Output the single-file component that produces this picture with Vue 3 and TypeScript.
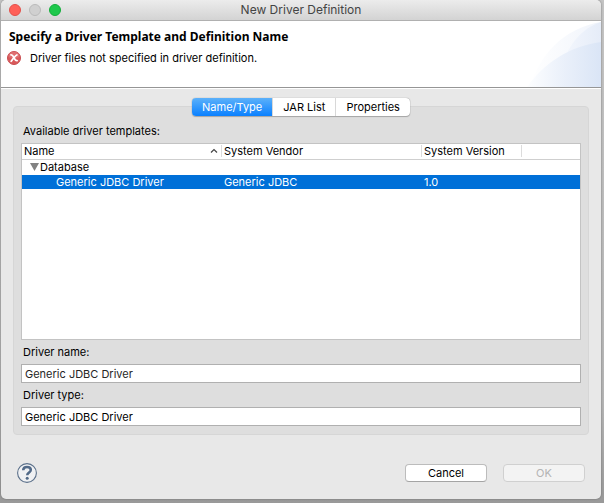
<script setup lang="ts">
import { ref } from 'vue'

interface DriverTemplate {
  name: string
  vendor: string
  version: string
}

const tabs = ['Name/Type', 'JAR List', 'Properties']
const activeTab = ref('Name/Type')

const templates: DriverTemplate[] = [
  { name: 'Generic JDBC Driver', vendor: 'Generic JDBC', version: '1.0' },
]
const selected = ref('Generic JDBC Driver')
const expanded = ref(true)
const driverName = ref('Generic JDBC Driver')
const driverType = ref('Generic JDBC Driver')
</script>

<template>
  <div class="desktop">
    <main class="window">
      <header class="titlebar">
        <div class="lights">
          <button type="button" class="light close" aria-label="Close"></button>
          <button type="button" class="light minimize" aria-label="Minimize" disabled></button>
          <button type="button" class="light maximize" aria-label="Zoom"></button>
        </div>
        <span class="title">New Driver Definition</span>
      </header>

      <section class="banner">
        <div class="banner-text">
          <h1>Specify a Driver Template and Definition Name</h1>
          <p class="message">
            <svg class="error" viewBox="0 0 14 14" aria-hidden="true">
              <circle cx="7" cy="7" r="6.5" fill="#d9595b" stroke="#c84d50" />
              <path d="M1.5 6a5.5 5.5 0 0 1 11 0c-3 1.500-8 1.500-11 0z" fill="#e57f80" opacity=".6" />
              <path d="M4 3.800c1.700-.2 2 1 2.800 2.600s1.300 3.500 3.300 3.300M9.900 4C7.800 5 6.500 7 4.200 10.200" fill="none" stroke="#fff" stroke-width="1.800" stroke-linecap="round" />
            </svg>
            <span>Driver files not specified in driver definition.</span>
          </p>
        </div>
        <svg class="swoosh" viewBox="0 0 75 66" aria-hidden="true">
          <defs>
            <linearGradient id="arc-back" x1="0" x2="1">
              <stop offset="0" stop-color="#fff" />
              <stop offset="1" stop-color="#f0f4fb" />
            </linearGradient>
            <linearGradient id="arc-mid" x1="0" x2="1">
              <stop offset="0" stop-color="#f4f7fd" />
              <stop offset="1" stop-color="#e5ecf8" />
            </linearGradient>
            <linearGradient id="arc-front" x1="0" x2="1">
              <stop offset="0" stop-color="#fdfeff" />
              <stop offset=".5" stop-color="#eaf0fa" />
              <stop offset="1" stop-color="#dae5f6" />
            </linearGradient>
          </defs>
          <path d="M4 66C13 34 38 7 75 1v65z" fill="url(#arc-back)" />
          <path d="M36 44C43 23 56 7 75 1v50H36z" fill="url(#arc-mid)" />
          <path d="M1 66C17 43 43 25 75 21v45z" fill="url(#arc-front)" />
        </svg>
      </section>

      <div class="content">
        <div class="tabs" role="tablist">
          <button
            v-for="tab in tabs"
            :key="tab"
            type="button"
            role="tab"
            class="tab"
            :class="{ active: tab === activeTab }"
            :aria-selected="tab === activeTab"
            @click="activeTab = tab"
          >{{ tab }}</button>
        </div>

        <section class="panel">
          <div id="templates-label" class="label">Available driver templates:</div>
          <div class="tree">
            <table aria-labelledby="templates-label">
              <colgroup>
                <col class="wide" />
                <col class="wide" />
                <col class="narrow" />
                <col />
              </colgroup>
              <thead>
                <tr>
                  <th scope="col">
                    <div class="head">
                      <span>Name</span>
                      <svg class="sort" viewBox="0 0 8 6" aria-hidden="true">
                        <path d="M1 4.500 4 1.500 7 4.500" fill="none" stroke="#444" stroke-width="1.200" />
                      </svg>
                    </div>
                  </th>
                  <th scope="col"><div class="head">System Vendor</div></th>
                  <th scope="col"><div class="head">System Version</div></th>
                  <td></td>
                </tr>
              </thead>
              <tbody>
                <tr class="group">
                  <td colspan="4">
                    <button type="button" class="branch" :aria-expanded="expanded" @click="expanded = !expanded">
                      <svg class="arrow" :class="{ closed: !expanded }" viewBox="0 0 9 8" aria-hidden="true">
                        <path d="M0 0h9L4.500 8z" fill="#828282" />
                      </svg>
                      <span>Database</span>
                    </button>
                  </td>
                </tr>
                <template v-if="expanded">
                  <tr
                    v-for="item in templates"
                    :key="item.name"
                    class="leaf"
                    :class="{ selected: item.name === selected }"
                    @click="selected = item.name"
                  >
                    <td class="leaf-name">{{ item.name }}</td>
                    <td>{{ item.vendor }}</td>
                    <td>{{ item.version }}</td>
                    <td></td>
                  </tr>
                </template>
              </tbody>
            </table>
          </div>

          <label class="label field-label" for="driver-name">Driver name:</label>
          <input id="driver-name" v-model="driverName" class="field editable" type="text" />
          <label class="label field-label" for="driver-type">Driver type:</label>
          <input id="driver-type" v-model="driverType" class="field" type="text" readonly />
        </section>
      </div>

      <footer class="footer">
        <button type="button" class="help" aria-label="Help">
          <svg viewBox="0 0 20 20" aria-hidden="true">
            <circle cx="10" cy="10" r="9.400" fill="#f0f1f3" stroke="#5b708a" stroke-width="1.100" />
            <path d="M6.200 7.300C6.300 5 7.800 4 10 4c2.300 0 3.800 1.100 3.800 2.900 0 2.500-3.600 2.600-3.600 5.400" fill="none" stroke="#526a88" stroke-width="2.500" />
            <circle cx="10.200" cy="15.200" r="1.500" fill="#526a88" />
          </svg>
        </button>
        <div class="actions">
          <button type="button" class="push">Cancel</button>
          <button type="button" class="push" disabled>OK</button>
        </div>
      </footer>
    </main>
  </div>
</template>

<style>
body {
  margin: 0;
}
</style>

<style scoped>
.desktop {
  box-sizing: border-box;
  min-height: 100vh;
  display: flex;
  padding: 0 3px 4px 1px;
  background: linear-gradient(#c4c4c4, #b4b4b4 80%, #999);
  font-family: Inter, "Liberation Sans", sans-serif;
  font-size: 11px;
  line-height: 14px;
  color: #000;
}
button,
input {
  font: inherit;
  color: inherit;
  margin: 0;
}
.window {
  flex: 1;
  min-width: 0;
  display: flex;
  flex-direction: column;
  overflow: hidden;
  background: #e8e8e8;
  border-radius: 5px;
  box-shadow: 0 0 2px #666;
}
.titlebar {
  display: grid;
  grid-template-columns: 1fr auto 1fr;
  align-items: center;
  height: 20px;
  border-bottom: 1px solid #b0b0b0;
  background: linear-gradient(#ececec, #d3d3d3);
}
.lights {
  display: flex;
  gap: 8px;
  padding-left: 8px;
}
.light {
  box-sizing: border-box;
  width: 12px;
  height: 12px;
  padding: 0;
  border: 1px solid;
  border-radius: 50%;
}
.close {
  background: #ff6058;
  border-color: #e2504a;
}
.minimize {
  background: #d0d0d0;
  border-color: #bababa;
}
.maximize {
  background: #1ec84c;
  border-color: #12ad3a;
}
.title {
  font-size: 12px;
  line-height: 20px;
  color: #444;
}
.banner {
  display: flex;
  justify-content: space-between;
  height: 66px;
  border-bottom: 1px solid #969696;
  box-shadow: 0 1px #fff;
  background: #fff;
}
.banner-text {
  padding: 7px 0 0 6px;
}
h1 {
  margin: 0;
  padding-left: 2px;
  font-family: "Noto Sans", "Open Sans", sans-serif;
  font-size: 12px;
  line-height: 17px;
  font-weight: 700;
}
.message {
  display: flex;
  align-items: center;
  gap: 9px;
  margin: 6px 0 0;
}
.error {
  width: 14px;
  height: 14px;
}
.swoosh {
  width: 75px;
  height: 66px;
}
.content {
  flex: 1;
  display: flex;
  flex-direction: column;
  padding: 10px 12px 0;
}
.tabs {
  z-index: 1;
  align-self: center;
  display: flex;
  height: 18px;
  margin-bottom: -10px;
  border-radius: 4px;
  background: #fff;
  box-shadow: 0 0 1px #777, 0 1px 1px #aaa;
}
.tab {
  padding: 0 10px;
  border: 0;
  background: none;
}
.tab + .tab {
  border-left: 1px solid #d8d8d8;
}
.tab:first-child {
  border-radius: 4px 0 0 4px;
}
.tab.active {
  color: #fff;
  background: linear-gradient(#5cb1fa, #0a80ff);
}
.panel {
  flex: 1;
  display: flex;
  flex-direction: column;
  padding: 17px 7px 8px;
  border: 1px solid #d6d6d6;
  border-radius: 4px;
  background: #dedede;
}
.label {
  padding: 0 2px;
  margin-bottom: 5px;
}
.tree {
  flex: 1;
  border: 1px solid #c3c3c3;
  background: #fff;
}
table {
  width: 100%;
  table-layout: fixed;
  border-collapse: collapse;
}
.wide {
  width: 200px;
}
.narrow {
  width: 100px;
}
th,
td {
  padding: 0 2px;
  text-align: left;
  font-weight: 400;
  white-space: nowrap;
}
thead tr {
  height: 15px;
  border-bottom: 1px solid #cfcfcf;
}
th {
  padding: 0;
}
.head {
  display: flex;
  align-items: center;
  justify-content: space-between;
  height: 12px;
  padding: 0 3px 0 2px;
  border-right: 1px solid #dcdcdc;
}
.sort {
  width: 8px;
  height: 6px;
}
.group {
  height: 16px;
}
.branch {
  display: flex;
  align-items: center;
  gap: 1px;
  padding: 0 0 0 6px;
  border: 0;
  background: none;
}
.arrow {
  width: 9px;
  height: 8px;
}
.arrow.closed {
  transform: rotate(-90deg);
}
.leaf {
  height: 14px;
}
.leaf-name {
  padding-left: 34px;
}
.selected {
  color: #fff;
  background: #0070d8;
}
.field-label {
  margin: 5px 0;
}
.field {
  box-sizing: border-box;
  width: 100%;
  height: 19px;
  padding: 1px 3px 0;
  border: 1px solid #b0b0b0;
  border-radius: 0;
  background: #fff;
}
.editable {
  color: #262626;
}
.footer {
  display: flex;
  align-items: center;
  justify-content: space-between;
  padding: 28px 16px 16px;
}
.help {
  width: 20px;
  height: 20px;
  padding: 0;
  border: 0;
  background: none;
}
.help svg {
  display: block;
}
.actions {
  display: flex;
  gap: 16px;
}
.push {
  box-sizing: border-box;
  width: 82px;
  height: 18px;
  padding: 0;
  border: 1px solid #bcbcbc;
  border-bottom-color: #a4a4a4;
  border-radius: 4px;
  background: #fff;
}
.push:disabled {
  color: #b4b4b4;
  border-color: #d0d0d0;
  background: #f3f3f3;
}
</style>
